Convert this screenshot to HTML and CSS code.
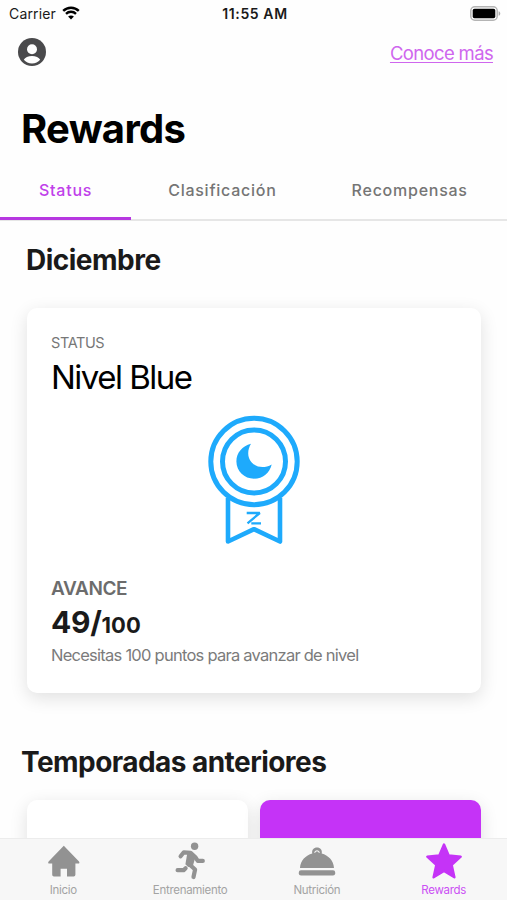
FILE: index.html
```html
<!DOCTYPE html>
<html lang="es">
<head>
    <meta charset="UTF-8">
    <meta name="viewport" content="width=device-width, initial-scale=1.0">
    <title>Rewards</title>
    <link rel="stylesheet" href="styles.css">
</head>
<body>
    <div class="status-bar">
        <div class="carrier">
            <span>Carrier</span>
            <svg class="wifi" viewBox="0 0 18 14">
                <path d="M1.2 4.9C5.5.6 12.5.6 16.8 4.9" />
                <path d="M4 7.8c2.8-2.7 7.2-2.7 10 0" />
                <path class="wifi-dot" d="M9 13.4 6.1 10.5c1.6-1.5 4.2-1.5 5.8 0z" />
            </svg>
        </div>
        <span class="time">11:55 AM</span>
        <div class="battery-wrap">
            <svg class="battery" viewBox="0 0 31 15">
                <rect x=".8" y=".8" width="26.4" height="13.4" rx="4" fill="#fff" stroke="#b4b4b4" stroke-width="1.5" />
                <rect x="2.7" y="2.8" width="22.6" height="9.4" rx="1.8" fill="#000" />
                <path d="M28.6 5.2c2.2.6 2.2 4 0 4.6z" fill="#aaa" />
            </svg>
        </div>
    </div>

    <header class="top-bar">
        <svg class="avatar" viewBox="0 0 28 28">
            <circle cx="14" cy="14" r="14" fill="#4a4a4c" />
            <circle cx="14" cy="11.2" r="5" fill="#fff" />
            <path d="M5.8 21.7c1.2-2.4 4.4-3.8 8.2-3.8s7 1.4 8.2 3.8c-2 2.4-4.9 3.8-8.2 3.8s-6.2-1.4-8.2-3.8z" fill="#fff" />
        </svg>
        <a class="more-link" href="#">Conoce más</a>
    </header>

    <h1>Rewards</h1>

    <nav class="tabs">
        <a class="tab active" href="#">Status</a>
        <a class="tab" href="#">Clasificación</a>
        <a class="tab" href="#">Recompensas</a>
    </nav>

    <main class="content">
        <h2 class="month">Diciembre</h2>

        <section class="card">
            <p class="card-label">STATUS</p>
            <p class="level">Nivel Blue</p>

            <svg class="medal" viewBox="0 0 92 130">
                <g fill="none" stroke="#1eaafc" stroke-width="5">
                    <circle cx="46" cy="46.5" r="43.2" />
                    <circle cx="46" cy="46.5" r="31.5" />
                    <path d="M20 83v43.5l26-12.3 26 12.3V83" stroke-width="4.6" stroke-linejoin="round" />
                </g>
                <path d="M43 28.8c-8.6 2.2-14.6 9-14.6 17.7 0 9.8 8 17.2 17.7 17.2 8.8 0 15.6-6 17.6-14.3-7.2 4.2-15.6 3.2-20.2-2.2-4.3-5-4.3-12.2-.5-18.4z" fill="#1eaafc" />
                <path d="M38.7 98H51.8L39.5 108.3M43.3 108.3H53" fill="none" stroke="#1eaafc" stroke-width="2.3" stroke-linejoin="bevel" />
            </svg>

            <p class="advance">AVANCE</p>
            <p class="points">49/<small>100</small></p>
            <p class="hint">Necesitas 100 puntos para avanzar de nivel</p>
        </section>

        <h2 class="seasons-title">Temporadas anteriores</h2>

        <div class="seasons">
            <div class="season"></div>
            <div class="season season-purple"></div>
        </div>
    </main>

    <footer class="tab-bar">
        <a class="nav-item" href="#">
            <svg viewBox="0 0 38 38">
                <path d="M19.8 3.8 35 19.4q1.200 2-.8 2.200h-2.800v11.200q0 1.700-1.700 1.700h-6.700v-7.700h-6.400v7.700H9.900q-1.700 0-1.700-1.700V21.600H5.400q-2-.2-.8-2.200z" />
            </svg>
            <span>Inicio</span>
        </a>
        <a class="nav-item" href="#">
            <svg viewBox="0 0 38 38">
                <circle cx="23.6" cy="4.3" r="3.7" />
                <g fill="none" stroke="#929292" stroke-width="4.2" stroke-linecap="round" stroke-linejoin="round">
                    <path d="M9.6 14.3l3.2-4 6.8.6 4.6 4.1 2.6 3.9h5" />
                    <path d="M6.6 28.2h6l2-2" />
                    <path d="M18.5 22.5l5.6 5-1.6 7.500" />
                </g>
                <path d="M16.6 9.5l8.2 4.1-2.8 10-4.8 1.4-2.8-2.8z" />
            </svg>
            <span>Entrenamiento</span>
        </a>
        <a class="nav-item" href="#">
            <svg viewBox="0 0 38 38">
                <path d="M2 26.1C2.4 18.5 7.8 13.5 14.3 11.6c-.8-3.4 1.4-6 4.7-6s5.5 2.6 4.7 6C30.2 13.5 35.6 18.5 36 26.1z" />
                <path d="M16.5 10.6q2.5-3.6 5 0" fill="none" stroke="#f7f7f7" stroke-width="1.1" />
                <rect x=".8" y="28.3" width="36.4" height="5.2" rx="2.2" />
            </svg>
            <span>Nutrición</span>
        </a>
        <a class="nav-item active" href="#">
            <svg viewBox="0 0 38 38">
                <path d="M19 2.5l4.7 11 12 1.2-9 8.2 2.7 12.4L19 29 8.6 35.3l2.7-12.4-9-8.2 12-1.2z" stroke="#c533f7" stroke-width="2.4" stroke-linejoin="round" />
            </svg>
            <span>Rewards</span>
        </a>
    </footer>
</body>
</html>
```
FILE: styles.css
```css
* {
    margin: 0;
    padding: 0;
    box-sizing: border-box;
}

body {
    font-family: Inter, "Liberation Sans", sans-serif;
    background: #fefefe;
    color: #1a1a1a;
    height: 100vh;
    display: flex;
    flex-direction: column;
    overflow: hidden;
}

a {
    text-decoration: none;
}

svg {
    display: block;
    flex-shrink: 0;
}

.status-bar {
    height: 28px;
    display: grid;
    grid-template-columns: 1fr auto 1fr;
    align-items: center;
    padding: 0 6px 2px 9px;
    font-size: 14px;
    flex-shrink: 0;
}

.carrier {
    display: flex;
    align-items: center;
    gap: 6px;
    letter-spacing: 0.15px;
}

.wifi {
    width: 18px;
    height: 14px;
    fill: none;
    stroke: #000;
    stroke-width: 2.4;
}

.wifi .wifi-dot {
    fill: #000;
    stroke: none;
}

.time {
    font-weight: 600;
    letter-spacing: 0.6px;
}

.battery-wrap {
    display: flex;
    justify-content: flex-end;
}

.battery {
    width: 31px;
    height: 15px;
}

.top-bar {
    height: 48px;
    display: flex;
    align-items: center;
    justify-content: space-between;
    padding: 0 14px 0 18px;
    flex-shrink: 0;
}

.avatar {
    width: 28px;
    height: 28px;
}

.more-link {
    padding-top: 1px;
    font-size: 18.5px;
    letter-spacing: -0.65px;
    color: #cf66ee;
    text-decoration: underline;
    text-decoration-thickness: 1px;
    text-underline-offset: 2px;
}

h1 {
    margin: 29px 0 0 21px;
    font-size: 40px;
    line-height: 48px;
    font-weight: 700;
    letter-spacing: -0.7px;
    color: #000;
    flex-shrink: 0;
}

.tabs {
    height: 55px;
    margin-top: 13px;
    display: flex;
    border-bottom: 2px solid #e6e6e6;
    flex-shrink: 0;
}

.tab {
    height: 54px;
    padding: 0 37.5px;
    font-size: 16px;
    line-height: 49px;
    font-weight: 500;
    letter-spacing: 0.75px;
    color: #757575;
}

.tab.active {
    padding: 0 39px;
    color: #c040ea;
    border-bottom: 3px solid #b637e0;
}

.tab.active + .tab {
    padding-left: 37px;
}

.content {
    flex: 1;
    overflow: hidden;
}

h2 {
    font-size: 28px;
    line-height: 34px;
    font-weight: 700;
    letter-spacing: -0.5px;
}

.month {
    margin: 22px 0 0 26px;
}

.card {
    height: 385px;
    margin: 31px 26px 0 27px;
    padding: 24px;
    background: #fff;
    border-radius: 10px;
    box-shadow: 0 5px 18px rgba(0, 0, 0, 0.12);
}

.card-label {
    font-size: 14.5px;
    line-height: 22px;
    letter-spacing: -0.4px;
    color: #777;
}

.level {
    font-size: 33px;
    line-height: 46px;
    letter-spacing: -1.5px;
    color: #000;
}

.medal {
    width: 92px;
    height: 130px;
    margin: 15px auto 0;
}

.advance {
    margin-top: 32px;
    font-size: 19px;
    line-height: 24px;
    font-weight: 600;
    letter-spacing: -0.4px;
    color: #6c6c6c;
}

.points {
    margin-top: 2px;
    font-size: 30px;
    line-height: 38px;
    font-weight: 700;
    letter-spacing: -0.3px;
}

.points small {
    font-size: 22px;
    letter-spacing: 0.1px;
}

.hint {
    margin-top: 1px;
    font-size: 16.5px;
    line-height: 20px;
    letter-spacing: -0.75px;
    color: #7b7b7b;
    white-space: nowrap;
}

.seasons-title {
    margin: 52px 0 0 21px;
    letter-spacing: -0.55px;
}

.seasons {
    display: grid;
    grid-template-columns: 1fr 1fr;
    gap: 12px;
    margin: 21px 26px 0 27px;
}

.season {
    height: 220px;
    background: #fff;
    border-radius: 10px;
    box-shadow: 0 5px 18px rgba(0, 0, 0, 0.12);
}

.season-purple {
    background: #c533f7;
}

.tab-bar {
    height: 62px;
    display: grid;
    grid-template-columns: repeat(4, 1fr);
    background: #f7f7f7;
    border-top: 1px solid #ececec;
    flex-shrink: 0;
}

.nav-item {
    display: flex;
    flex-direction: column;
    align-items: center;
    gap: 2px;
    padding-top: 3px;
    font-size: 11.5px;
    line-height: 17px;
    letter-spacing: -0.3px;
    color: #a3a3a3;
}

.nav-item svg {
    width: 38px;
    height: 38px;
    fill: #929292;
}

.nav-item.active {
    color: #cb50f4;
}

.nav-item.active svg {
    fill: #c533f7;
}
```
